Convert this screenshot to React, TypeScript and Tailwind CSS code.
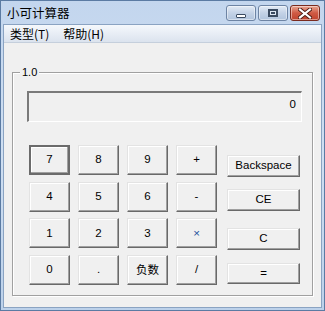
import React from "react";

const cjk = { fontFamily: '"Noto Sans CJK SC", "Noto Sans", sans-serif' };
const ui = { fontFamily: '"Liberation Sans", "Noto Sans CJK SC", sans-serif' };

function Btn({ label, def, blue, cls }: { label: string; def?: boolean; blue?: boolean; cls?: string }) {
  const base = def
    ? "border-2 border-[#6b6b6b] shadow-[inset_-1px_-1px_0_#a0a0a0,inset_1px_1px_0_#ffffff]"
    : "border border-t-[#e3e3e3] border-l-[#e3e3e3] border-r-[#696969] border-b-[#696969] shadow-[inset_-1px_-1px_0_#a0a0a0,inset_1px_1px_0_#ffffff]";
  return (
    <div
      className={`${base} ${cls ?? "w-[41px] h-[30px]"} bg-[#f0f0f0] flex items-center justify-center text-[11.5px] ${blue ? "text-[#1b4f9c]" : "text-black"}`}
      style={label === "负数" ? cjk : ui}
    >
      {label}
    </div>
  );
}

function WinBtn({ kind }: { kind: "min" | "max" | "close" }) {
  const isClose = kind === "close";
  return (
    <div
      className={`w-[30px] h-[16px] rounded-[3px] border flex items-center justify-center ${
        isClose
          ? "border-[#7a2a1e] bg-gradient-to-b from-[#e8a593] via-[#cf5a44] to-[#c0432e]"
          : "border-[#6d84a4] bg-gradient-to-b from-[#e3ebf5] via-[#c3d2e6] to-[#b1c4dd]"
      } shadow-[inset_0_0_0_1px_rgba(255,255,255,0.45)]`}
    >
      {kind === "min" && <div className="w-[10px] h-[4px] mt-[5px] bg-white border border-[#3a4a60] rounded-[1px]" />}
      {kind === "max" && (
        <div className="w-[10px] h-[8px] border-[2px] border-[#3a4a60] bg-[#dce6f2] flex items-center justify-center">
          <div className="w-[4px] h-[2px] border border-[#3a4a60]" />
        </div>
      )}
      {kind === "close" && (
        <svg width="14" height="11" viewBox="0 0 14 11">
          <path d="M2 1.5 L12 9.5 M12 1.5 L2 9.5" stroke="#4a1a12" strokeWidth="4" strokeLinecap="square" />
          <path d="M2 1.5 L12 9.5 M12 1.5 L2 9.5" stroke="#ffffff" strokeWidth="2.2" strokeLinecap="square" />
        </svg>
      )}
    </div>
  );
}

export default function App() {
  const rows: { l: string; def?: boolean; blue?: boolean }[][] = [
    [{ l: "7", def: true }, { l: "8" }, { l: "9" }, { l: "+" }],
    [{ l: "4" }, { l: "5" }, { l: "6" }, { l: "-" }],
    [{ l: "1" }, { l: "2" }, { l: "3" }, { l: "×", blue: true }],
    [{ l: "0" }, { l: "." }, { l: "负数" }, { l: "/" }],
  ];
  return (
    <div className="w-[325px] h-[311px] flex flex-col border border-[#5b7ba3] bg-gradient-to-b from-[#c3d6ee] via-[#cfdff2] to-[#bcd1ea] overflow-hidden">
      <div className="h-[23px] flex items-center pl-[6px] pr-[4px] shrink-0">
        <span className="text-[12.5px] text-black leading-none mt-[1px]" style={cjk}>
          小可计算器
        </span>
        <div className="ml-auto flex items-center gap-[2px] mt-[1px]">
          <WinBtn kind="min" />
          <WinBtn kind="max" />
          <WinBtn kind="close" />
        </div>
      </div>
      <div className="flex-1 mx-[2px] mb-[2px] flex flex-col border border-[#8aa3c2] bg-[#f0f0f0]">
        <div className="h-[18px] shrink-0 flex items-center bg-gradient-to-b from-[#f5f8fc] to-[#dbe3ee] border-b border-[#c5cfdc] text-[12px] text-black" style={cjk}>
          <span className="ml-[6px]">类型(T)</span>
          <span className="ml-[14px]">帮助(H)</span>
        </div>
        <div className="flex-1 pl-[8px] pt-[29px]">
          <div className="relative w-[301px] h-[224px] border border-[#a0a0a0] shadow-[1px_1px_0_#ffffff,inset_1px_1px_0_#ffffff] pl-[14px] pt-[18px]">
            <span className="absolute left-[7px] top-[-8px] px-[2px] bg-[#f0f0f0] text-[11px] leading-[14px] text-black" style={ui}>
              1.0
            </span>
            <div className="w-[275px] h-[31px] border-t-2 border-l-2 border-t-[#7a7a7a] border-l-[#7a7a7a] border-r border-b border-r-white border-b-white flex items-start justify-end pr-[5px] pt-[3px] text-[11.5px] text-black" style={ui}>
              0
            </div>
            <div className="flex mt-[23px] pl-[2px]">
              <div className="grid grid-cols-4 gap-x-[8px] gap-y-[6.7px]">
                {rows.flat().map((b, i) => (
                  <Btn key={i} label={b.l} def={b.def} blue={b.blue} />
                ))}
              </div>
              <div className="flex flex-col ml-[10px] mt-[10px]">
                <Btn label="Backspace" cls="w-[73px] h-[22px]" />
                <Btn label="CE" cls="w-[73px] h-[22px] mt-[12px]" />
                <Btn label="C" cls="w-[73px] h-[22px] mt-[17px]" />
                <Btn label="=" cls="w-[73px] h-[21px] mt-[13px]" />
              </div>
            </div>
          </div>
        </div>
      </div>
    </div>
  );
}
